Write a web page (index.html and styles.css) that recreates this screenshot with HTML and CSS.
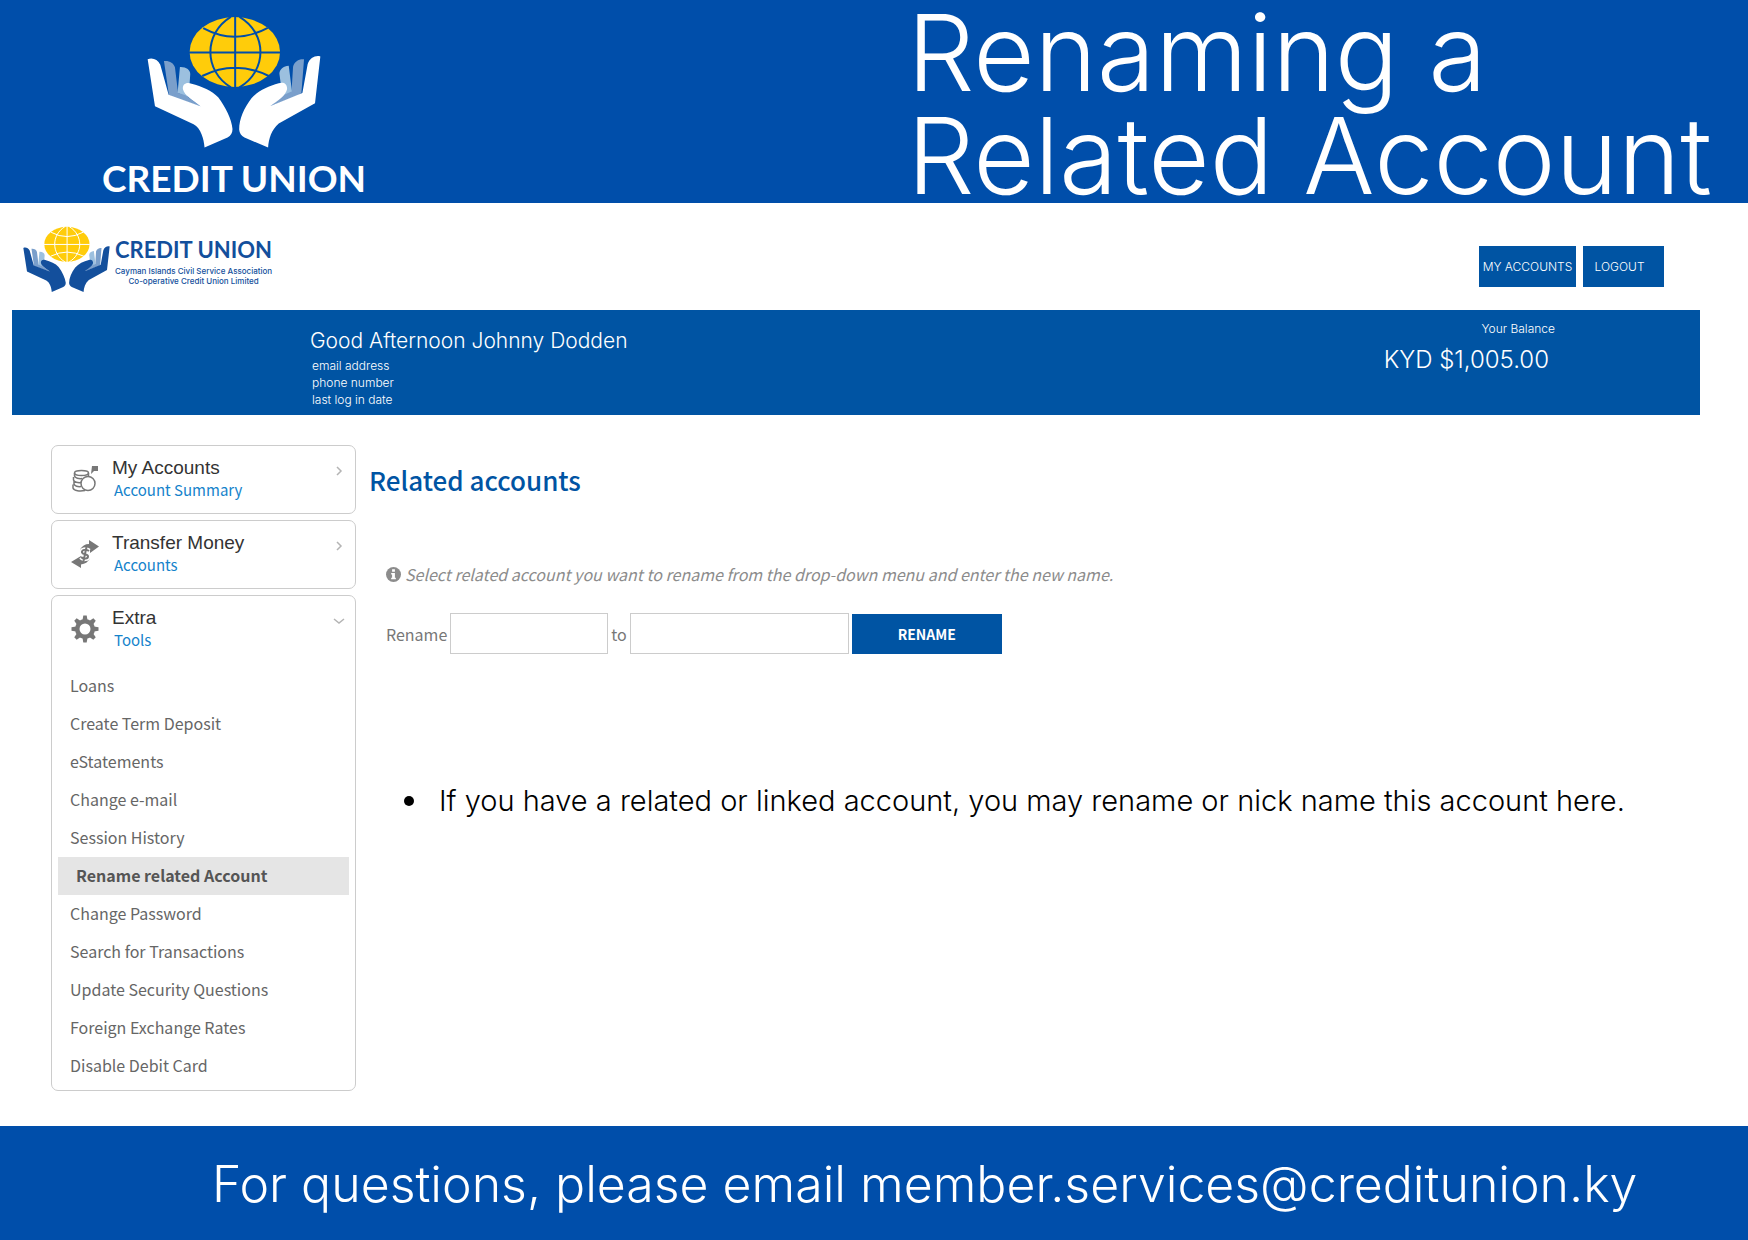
FILE: index.html
```html
<!DOCTYPE html>
<html lang="en">
<head>
<meta charset="utf-8">
<title>Renaming a Related Account</title>
<link rel="stylesheet" href="styles.css">
</head>
<body>
<svg class="sprite" aria-hidden="true">
  <symbol id="emblem" viewBox="160 40 535 405">
    <ellipse class="globe" cx="430" cy="154" rx="136" ry="105"/>
    <g class="globe-lines">
      <path d="M431 46V262M292 155H568M335 82Q430 134 529 81M332 226Q430 176 532 226M418 48C336 98 336 210 418 260M444 48C528 98 528 210 444 260"/>
    </g>
    <path class="finger-far" d="M217 181C232 179 246 186 250 200L260 282 327 317 232 284Z"/>
    <path class="finger-near" d="M265 199C283 198 297 208 296 221L294 249 276 258 290 292 258 276Z"/>
    <path class="finger-far" d="M258 276L282 284 327 317 240 288Z"/>
    <path class="finger-far" d="M638 176C624 174 609 182 605 198L600 280 537 316 630 278Z"/>
    <path class="finger-near" d="M592 195C576 196 564 206 564 219L568 249 584 256 572 290 602 274Z"/>
    <path class="finger-far" d="M602 272L578 282 537 316 626 282Z"/>
    <path class="hand" d="M168 176C182 170 198 176 206 192L231 282 327 317C302 298 279 285 274 266C272 250 284 244 300 249C330 257 362 270 380 290C402 320 420 355 423 385C423 397 418 405 408 411L339 441C337 415 328 383 306 371L190 317Z"/>
    <path class="hand" d="M687 167C672 163 655 172 649 190L633 277 537 316C560 300 583 285 587 266C588 249 576 243 562 248C530 257 500 270 480 293C458 322 443 355 443 387C444 398 449 406 459 411L530 441C532 415 540 388 562 369L671 308Z"/>
  </symbol>
</svg>

<header class="banner">
  <div class="brand">
    <svg class="brand-mark" aria-hidden="true"><use href="#emblem"/></svg>
    <span class="brand-name">CREDIT UNION</span>
  </div>
  <h1 class="banner-title">Renaming a<br>Related Account</h1>
</header>

<div class="topbar">
  <div class="logo">
    <svg class="logo-mark" aria-hidden="true"><use href="#emblem"/></svg>
    <div class="logo-text">
      <span class="logo-name">CREDIT UNION</span>
      <span class="logo-sub">Cayman Islands Civil Service Association<br>Co-operative Credit Union Limited</span>
    </div>
  </div>
  <nav class="top-nav" aria-label="Session">
    <button class="nav-button" type="button">MY ACCOUNTS</button>
    <button class="nav-button nav-logout" type="button">LOGOUT</button>
  </nav>
</div>

<section class="welcome">
  <div class="member">
    <p class="greeting">Good Afternoon Johnny Dodden</p>
    <p class="detail">email address</p>
    <p class="detail">phone number</p>
    <p class="detail">last log in date</p>
  </div>
  <div class="balance">
    <p class="balance-label">Your Balance</p>
    <p class="balance-value">KYD $1,005.00</p>
  </div>
</section>

<main class="content">
  <aside class="sidebar">
    <a class="card card-head" href="#accounts">
      <svg class="card-icon" viewBox="0 0 28 28" aria-hidden="true">
        <g fill="none" stroke="#777" stroke-width="1.5">
          <ellipse cx="10.500" cy="8" rx="7" ry="2.500"/>
          <path d="M3.500 8V11C4 13 8 14 11 13.500M2.500 12V15C3 17 7 18 10 17.500M3 16V19C3.500 21 7 22 10 21.500M2 19.500V23C3 26 9 26.500 14 25.500M17.500 8V11"/>
          <circle cx="17" cy="18.500" r="7"/>
        </g>
        <path fill="#777" d="M21 1H27V6H23L20 9Z"/>
      </svg>
      <span class="card-text"><span class="card-title">My Accounts</span><span class="card-sub">Account Summary</span></span>
      <svg class="chevron" viewBox="0 0 12 12" aria-hidden="true"><path d="M4 2L8 6L4 10"/></svg>
    </a>
    <a class="card card-head" href="#transfer">
      <svg class="card-icon" viewBox="0 0 28 28" aria-hidden="true">
        <g fill="#777">
          <path d="M18 0L28 6.500 19 13V9.500C16 8.500 13 10 11 12L9 9.500C11 6 14 4 18 4Z"/>
          <path d="M10 28L0 22 10 16V19C13 19.500 15 18 17 16L19 18.500C17 22 14 24 10 24.500Z"/>
        </g>
        <path fill="none" stroke="#fff" stroke-width="5" d="M18 11C15 8.500 10.500 10 11 12.500C11.500 15 17 13.500 17 16.500C17 19 12.500 19.500 10 17"/>
        <path fill="none" stroke="#777" stroke-width="2" d="M18 11C15 8.500 10.500 10 11 12.500C11.500 15 17 13.500 17 16.500C17 19 12.500 19.500 10 17M15.500 7L12.500 21"/>
      </svg>
      <span class="card-text"><span class="card-title">Transfer Money</span><span class="card-sub">Accounts</span></span>
      <svg class="chevron" viewBox="0 0 12 12" aria-hidden="true"><path d="M4 2L8 6L4 10"/></svg>
    </a>
    <div class="card">
      <a class="card-head" href="#extra">
        <svg class="card-icon" viewBox="0 0 28 28" aria-hidden="true">
          <g fill="#777">
            <path id="t" d="M11.500 5L12.300 .5H15.700L16.500 5V23L15.700 27.500H12.300L11.500 23Z"/>
            <use href="#t" transform="rotate(45 14 14)"/>
            <use href="#t" transform="rotate(90 14 14)"/>
            <use href="#t" transform="rotate(135 14 14)"/>
            <circle cx="14" cy="14" r="10"/>
          </g>
          <circle cx="14" cy="14" r="5.500" fill="#fff"/>
        </svg>
        <span class="card-text"><span class="card-title">Extra</span><span class="card-sub">Tools</span></span>
        <svg class="chevron" viewBox="0 0 12 12" aria-hidden="true"><path d="M1 4L6 8L11 4"/></svg>
      </a>
      <ul class="menu">
        <li><a href="#loans">Loans</a></li>
        <li><a href="#deposit">Create Term Deposit</a></li>
        <li><a href="#estatements">eStatements</a></li>
        <li><a href="#email">Change e-mail</a></li>
        <li><a href="#history">Session History</a></li>
        <li><a class="current" href="#rename" aria-current="page">Rename related Account</a></li>
        <li><a href="#password">Change Password</a></li>
        <li><a href="#search">Search for Transactions</a></li>
        <li><a href="#security">Update Security Questions</a></li>
        <li><a href="#rates">Foreign Exchange Rates</a></li>
        <li><a href="#card">Disable Debit Card</a></li>
      </ul>
    </div>
  </aside>

  <section class="panel">
    <h2 class="panel-title">Related accounts</h2>
    <p class="hint">
      <svg class="hint-icon" viewBox="0 0 16 16" aria-hidden="true"><circle cx="8" cy="8" r="8" fill="#8c8c8c"/><path fill="#fff" d="M6.500 2.500H9.500V5H6.500ZM5.500 6.500H9.500V11.500H10.500V13H5.500V11.500H6.500V8H5.500Z"/></svg>
      <em>Select related account you want to rename from the drop-down menu and enter the new name.</em>
    </p>
    <form class="rename-form">
      <label for="from">Rename</label>
      <input class="field field-from" id="from" type="text">
      <label for="to">to</label>
      <input class="field field-to" id="to" type="text">
      <button class="submit" type="button">RENAME</button>
    </form>
    <ul class="notes">
      <li>If you have a related or linked account, you may rename or nick name this account here.</li>
    </ul>
  </section>
</main>

<footer class="footer">For questions, please email member.services@creditunion.ky</footer>
</body>
</html>
```
FILE: styles.css
```css
* { box-sizing: border-box; }

body {
  margin: 0;
  min-height: 100vh;
  display: flex;
  flex-direction: column;
  background: #fff;
  color: #000;
  font-family: Inter, "Liberation Sans", sans-serif;
  font-weight: 300;
}

p, h1, h2, ul { margin: 0; padding: 0; }
a { color: inherit; text-decoration: none; }
button { border: 0; padding: 0; font: inherit; color: #fff; cursor: pointer; }
.sprite { position: absolute; width: 0; height: 0; }

/* Credit union emblem */
.globe { fill: #ffcc0a; }
.globe-lines { fill: none; stroke: var(--line); stroke-width: 6px; }
.hand { fill: var(--hand); }
.finger-far { fill: #7a9fcb; }
.finger-near { fill: #9cc0df; }

.banner {
  display: flex;
  justify-content: space-between;
  padding: 0 36px 0 102px;
  background: #004eaa;
  color: #fff;
}
.brand {
  --line: #004eaa;
  --hand: #fff;
  display: flex;
  flex-direction: column;
  align-items: center;
  gap: 9px;
  padding-top: 14px;
}
.brand-mark { width: 178px; height: 135px; }
.brand-name { font-family: Lato, sans-serif; font-weight: 700; font-size: 37px; line-height: 40px; }
.banner-title { font-weight: 300; font-size: 106px; line-height: 103px; padding-top: 1px; margin-bottom: -4px; }

.topbar {
  display: flex;
  justify-content: space-between;
  align-items: center;
  padding: 22px 84px 17px 22px;
}
.logo {
  --line: #fff;
  --hand: #134f9c;
  display: flex;
  align-items: center;
  gap: 4px;
  color: #134f9c;
}
.logo-mark { width: 89px; height: 68px; }
.logo-text { display: flex; flex-direction: column; gap: 3px; padding-top: 5px; }
.logo-name { font-family: Lato, sans-serif; font-weight: 700; font-size: 22px; line-height: 26px; }
.logo-sub { font-weight: 500; font-size: 8px; line-height: 10px; text-align: center; }
.top-nav { display: flex; gap: 7px; padding-top: 14px; }
.nav-button { width: 97px; height: 41px; background: #0054a3; font-size: 12px; }
.nav-logout { width: 81px; padding-right: 8px; }

.welcome {
  display: flex;
  justify-content: space-between;
  margin: 0 48px 0 12px;
  padding: 10px 145px 7px 298px;
  background: #0054a3;
  color: #fff;
}
.member { padding-top: 7px; }
.greeting { font-size: 21px; line-height: 28px; padding-bottom: 2px; }
.detail { font-size: 12px; line-height: 17px; padding-left: 2px; }
.balance { text-align: right; }
.balance-label { font-size: 12px; line-height: 18px; }
.balance-value { font-size: 24px; line-height: 44px; padding-right: 6px; }

.content {
  flex: 1;
  display: flex;
  gap: 13px;
  padding: 30px 51px 35px;
  font-family: "Noto Sans CJK SC", sans-serif;
  font-weight: 400;
}
.sidebar { width: 305px; display: flex; flex-direction: column; gap: 6px; flex-shrink: 0; }
.card { border: 1px solid #ccc; border-radius: 7px; }
.card-head { display: flex; align-items: flex-start; padding: 11px 10px 12px 19px; }
.card .card-head { padding-bottom: 16px; }
.card-icon { width: 28px; height: 28px; margin: 8px 13px 0 0; }
.card-text { flex: 1; display: flex; flex-direction: column; }
.card-title { font-family: "Liberation Sans", sans-serif; font-size: 19px; line-height: 22px; color: #333; }
.card-sub { font-size: 15px; line-height: 22px; padding-left: 2px; color: #1583cb; }
.chevron { width: 12px; height: 12px; margin-top: 8px; fill: none; stroke: #b4b4b4; stroke-width: 1.5px; }

.menu { list-style: none; padding: 0 6px 5px; }
.menu a { display: block; padding: 0 12px; font-size: 16px; line-height: 36px; height: 38px; color: #666; }
.menu .current { padding-left: 18px; background: #e5e5e5; color: #555; font-weight: 700; }

.panel { flex: 1; }
.panel-title { font-size: 26px; line-height: 36px; padding-top: 17px; font-weight: 500; color: #0054a3; }
.hint { display: flex; align-items: center; gap: 4px; margin: 64px 0 0 17px; font-size: 16px; line-height: 24px; color: #8c8c8c; }
.hint-icon { width: 15px; height: 15px; }
.rename-form { display: flex; align-items: center; gap: 3px; margin: 27px 0 0 17px; font-size: 16px; color: #777; }
.field { height: 41px; border: 1px solid #ccc; background: #fff; }
.field-from { width: 158px; }
.field-to { width: 219px; }
.submit { width: 150px; height: 40px; background: #0054a3; font-weight: 700; font-size: 14px; }
.notes { margin: 127px 0 0 35px; list-style: none; font-family: Inter, "Liberation Sans", sans-serif; font-weight: 300; font-size: 29px; line-height: 40px; }
.notes li { display: flex; align-items: center; gap: 25px; }
.notes li::before { content: ""; flex: none; width: 10px; height: 10px; border-radius: 50%; background: #000; }

.footer {
  padding: 28px 60px 26px 212px;
  background: #004eaa;
  color: #fff;
  font-size: 50px;
  line-height: 60px;
}
```
